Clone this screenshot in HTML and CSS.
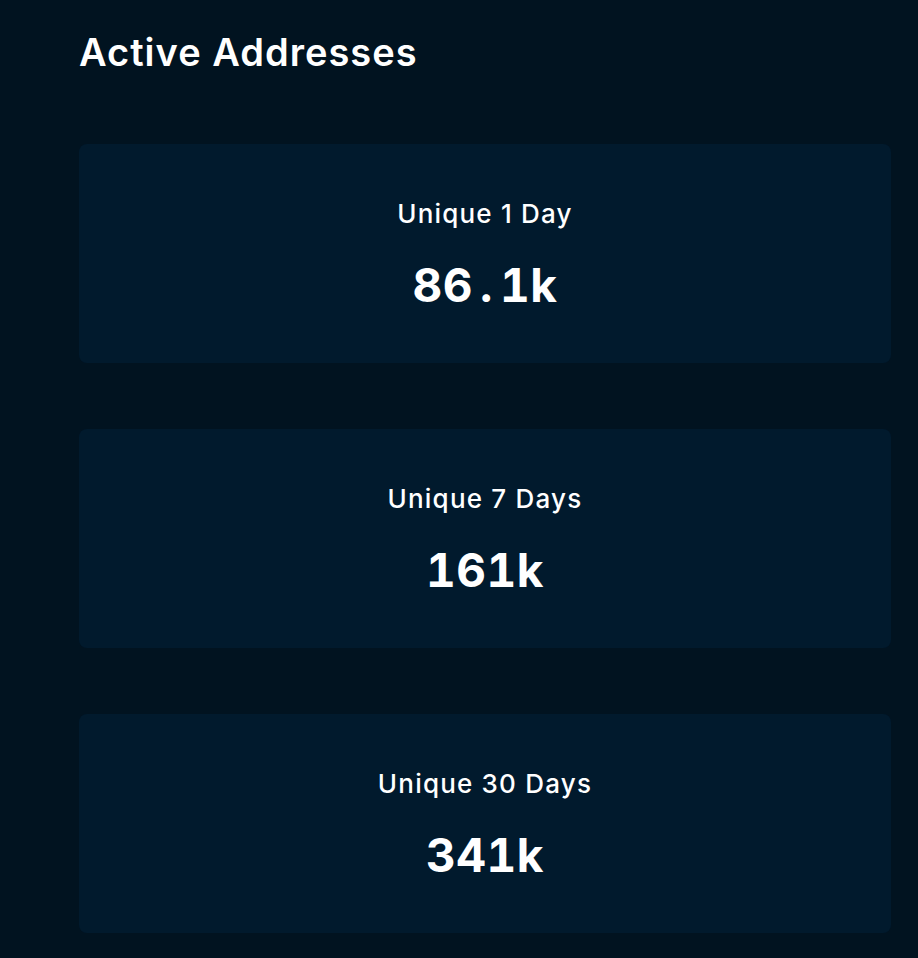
FILE: index.html
```html
<!DOCTYPE html>
<html lang="en">
<head>
    <meta charset="UTF-8">
    <title>Active Addresses</title>
    <meta name="viewport" content="width=device-width, initial-scale=1.0">
    <link rel="stylesheet" href="styles.css">
</head>
<body>
    <div class="page">
        <h1 class="title">Active Addresses</h1>

        <div class="stats">
            <div class="stat-card">
                <div class="stat-label">Unique 1 Day</div>
                <div class="stat-value">86<span class="dot">.</span>1k</div>
            </div>
            <div class="stat-card">
                <div class="stat-label">Unique 7 Days</div>
                <div class="stat-value">161k</div>
            </div>
            <div class="stat-card">
                <div class="stat-label">Unique 30 Days</div>
                <div class="stat-value">341k</div>
            </div>
        </div>
    </div>
</body>
</html>
```

FILE: styles.css
```css
body {
    margin: 0;
    background-color: #011320;
    color: #ffffff;
    font-family: Inter, "Noto Sans", sans-serif;
}
.page {
    padding: 29px 27px 26px 79px;
}
.title {
    margin: 0;
    font-size: 38px;
    font-weight: 600;
    line-height: 46px;
    letter-spacing: 1px;
}
.stats {
    display: flex;
    flex-direction: column;
    gap: 66px;
    margin-top: 69px;
}
.stat-card {
    height: 219px;
    box-sizing: border-box;
    padding-top: 3px;
    border-radius: 8px;
    background-color: #011a2d;
    display: flex;
    flex-direction: column;
    align-items: center;
    justify-content: center;
    gap: 28px;
}
.stat-label {
    font-size: 26px;
    font-weight: 500;
    line-height: 31px;
    letter-spacing: 1.2px;
}
.stat-value {
    font-size: 46px;
    font-weight: 700;
    line-height: 56px;
    font-variant-numeric: tabular-nums;
    letter-spacing: 0.5px;
}
.stat-value .dot {
    margin: 0 7px;
}
```
